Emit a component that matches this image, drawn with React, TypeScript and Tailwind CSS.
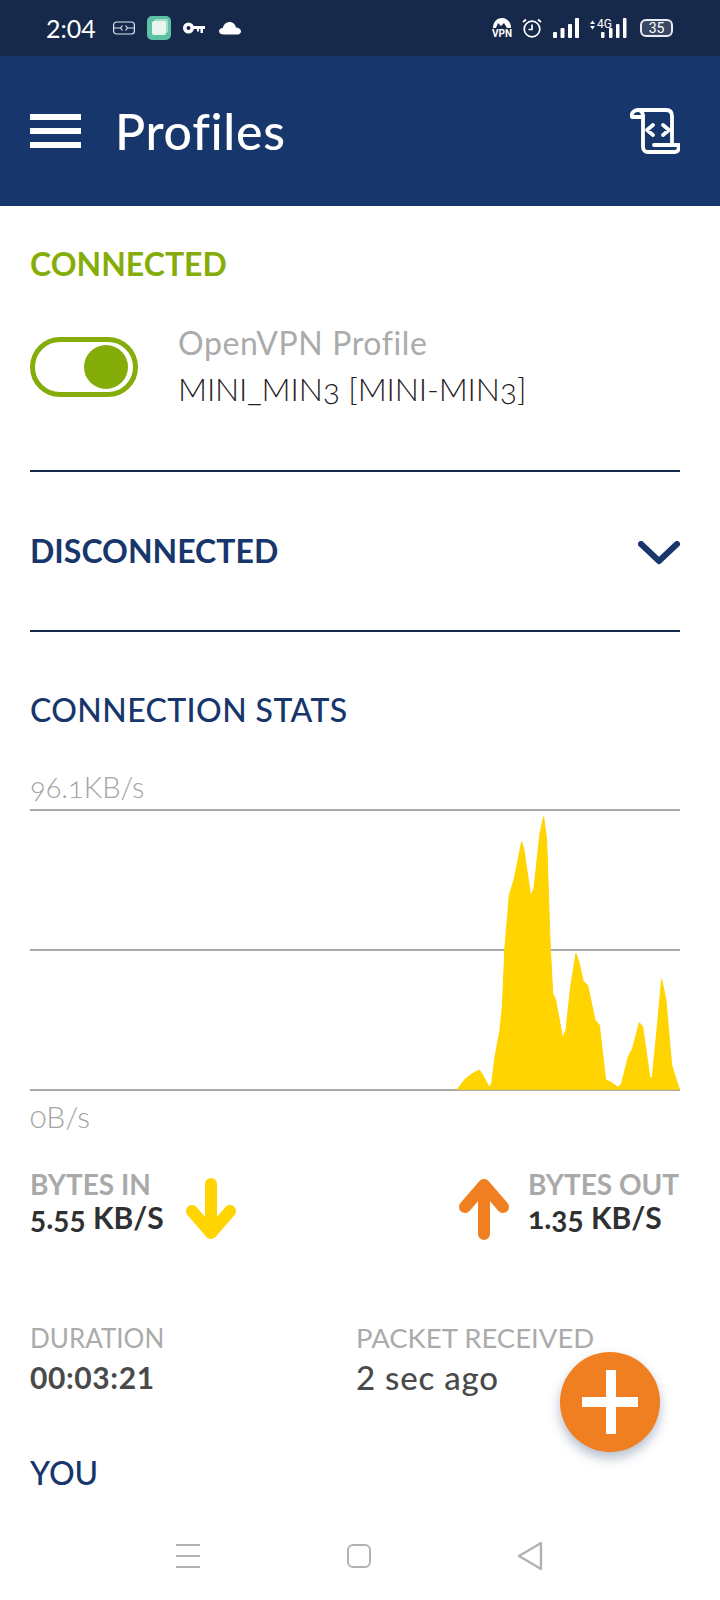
import React from "react";

const chartArea =
  "M52,868 L75,838 L95,822 L118,810 L128,825 L148,862 L155,850 L165,770 L180,690 L187,620 L195,440 L208,285 L222,240 L245,125 L252,150 L272,288 L282,265 L300,100 L311,50 L320,120 L330,420 L338,580 L347,600 L368,715 L378,690 L392,560 L408,460 L418,490 L430,545 L443,555 L465,660 L478,675 L497,840 L510,845 L535,862 L545,850 L565,770 L578,745 L598,668 L608,680 L630,835 L637,830 L650,700 L665,538 L678,600 L695,795 L718,868 Z";

function StatusBar() {
  return (
    <div className="h-14 shrink-0 bg-[#17294a] flex items-center text-white">
      <span className="ml-[46px] w-[50px] text-[25px] leading-none font-['Lato',sans-serif]">2:04</span>
      <svg className="ml-[17px]" width="22" height="14" viewBox="0 0 22 14" fill="none" stroke="#dfe6f2" strokeWidth="1.2">
        <rect x="0.6" y="1" width="20.8" height="12" rx="3" />
        <path d="M1 7H7M15 7H21M9.5 4.5L7.5 7L9.5 9.5M12.5 4.5L14.5 7L12.5 9.5" />
      </svg>
      <div className="ml-3 w-6 h-6 rounded-[5px] bg-[#5cc2a2] flex items-center justify-center">
        <div className="w-3.5 h-3.5 rounded-[2px] bg-[#e6f5ef] shadow-[2px_-2px_0_#a6dcc9]" />
      </div>
      <svg className="ml-3" width="22" height="12" viewBox="0 0 22 12" fill="white">
        <path d="M5.5 0.5a5.5 5.5 0 1 1-0.01 11a5.5 5.5 0 0 1 0.01-11zM5.5 4a2 2 0 1 0 0.01 4a2 2 0 0 0-0.01-4z" fillRule="evenodd" />
        <path d="M10 4H22V7H20V11H17.5V7H16V9.5H14V7H10z" />
      </svg>
      <svg className="ml-3.5" width="22" height="14" viewBox="0 0 22 14" fill="white">
        <path d="M5 13.5C2 13.5 0 12.2 0 10.2C0 8.3 1.6 7 3.8 7C4.6 3.2 7.5 1 10.6 1C14 1 16.4 3.3 17 6.6C19.8 6.8 22 8.2 22 10.4C22 12.3 20.2 13.5 17.5 13.5z" />
      </svg>

      <div className="ml-auto flex items-center">
        <div className="w-5 h-[22px] flex flex-col items-center">
          <svg width="20" height="11" viewBox="0 0 20 11" fill="white">
            <path d="M1 11C1 5 5 1 10 1C15 1 19 5 19 11H15L12 6L9 9L6 6L4 11z" />
          </svg>
          <span className="text-[10px] leading-[11px] font-bold font-['Roboto',sans-serif]">VPN</span>
        </div>
        <svg className="ml-2.5" width="20" height="20" viewBox="0 0 20 20" fill="none" stroke="white" strokeWidth="1.7">
          <circle cx="10" cy="11" r="7.8" />
          <path d="M10 6.5V11.5H6.5M1 4L4 1.5M19 4L16 1.5" />
        </svg>
        <svg className="ml-[11px]" width="26" height="20" viewBox="0 0 26 20" fill="white">
          <rect x="0" y="14" width="4" height="6" rx="1" />
          <rect x="7.5" y="10" width="4" height="10" rx="1" />
          <rect x="15" y="6" width="4" height="14" rx="1" />
          <rect x="22" y="0" width="4" height="20" rx="1" />
        </svg>
        <div className="ml-2.5 relative w-[38px] h-5">
          <svg width="38" height="20" viewBox="0 0 38 20" fill="white">
            <path d="M1 6L3.5 2.5L6 6zM1 8L3.5 11.5L6 8z" />
            <rect x="12" y="14" width="3.5" height="6" rx="1" />
            <rect x="20" y="10" width="3.5" height="10" rx="1" />
            <rect x="27" y="6" width="3.5" height="14" rx="1" />
            <rect x="34" y="0" width="3.5" height="20" rx="1" />
          </svg>
          <span className="absolute left-2 -top-[1px] text-[12px] leading-[14px] font-['Roboto',sans-serif]">4G</span>
        </div>
        <div className="ml-[13px] mr-[47px] w-[33px] h-[18px] rounded-[6px] border-2 border-[#e8edf5] bg-[#3a4763] flex items-center justify-center text-[14px] leading-none font-['Roboto',sans-serif]">
          35
        </div>
      </div>
    </div>
  );
}

function AppBar() {
  return (
    <div className="h-[150px] shrink-0 bg-[#17366b] flex items-center pl-[30px] pr-[40px] text-white">
      <div className="w-[51px] h-[34px] flex flex-col justify-between">
        <div className="h-1.5 bg-white" />
        <div className="h-1.5 bg-white" />
        <div className="h-1.5 bg-white" />
      </div>
      <h1 className="ml-[34px] text-[50px] leading-none font-medium tracking-[0.7px] font-['Lato',sans-serif]">Profiles</h1>
      <svg className="ml-auto" width="50" height="46" viewBox="0 0 50 46" fill="none" stroke="white" strokeWidth="3.8" strokeLinejoin="round" strokeLinecap="round">
        <path d="M8 2H36C40 2 42 4 42 8V36" />
        <path d="M13 8V39C13 42 15 44 18 44H45C48 44 49 41 49 37H24" />
        <path d="M2 9C1 5 4 2 8 2C11 2 13 4 13 9z" />
        <path d="M23 17L17 22L23 27M33 17L39 22L33 27" />
      </svg>
    </div>
  );
}

function StatBlock({ label, value, right }: { label: string; value: string; right?: boolean }) {
  return (
    <div className={right ? "w-[152px]" : "w-[136px]"}>
      <div className="h-[32px] flex items-center text-[28px] leading-none font-bold text-[#a9a9a9] whitespace-nowrap">{label}</div>
      <div className="h-[34px] flex items-center text-[30px] leading-none font-bold text-[#2f3032] whitespace-nowrap oldstyle-nums">{value}</div>
    </div>
  );
}

function Arrow({ up, color }: { up?: boolean; color: string }) {
  return (
    <svg width="50" height="62" viewBox="0 0 50 62" fill="none" stroke={color} strokeWidth="12" strokeLinecap="round" strokeLinejoin="round">
      {up ? <path d="M25 56V8M6 29L25 7L44 29" /> : <path d="M25 6V54M6 33L25 55L44 33" />}
    </svg>
  );
}

export default function App() {
  return (
    <div className="relative w-[720px] h-[1600px] overflow-hidden bg-white flex flex-col font-['Lato',sans-serif]">
      <StatusBar />
      <AppBar />

      <main className="flex-1 pl-[30px] pr-[40px]">
        <h2 className="mt-[38px] h-10 flex items-center text-[32px] leading-none font-bold text-[#85ad0a]">CONNECTED</h2>

        <div className="mt-[35px] h-24 flex items-center">
          <div className="w-[108px] h-[60px] rounded-full border-[5px] border-[#85ad0a] flex items-center justify-end pr-[5px]">
            <div className="w-11 h-11 rounded-full bg-[#85ad0a]" />
          </div>
          <div className="ml-10">
            <div className="h-11 flex items-center text-[32px] leading-none tracking-[0.6px] text-[#ababab]">OpenVPN Profile</div>
            <div className="h-12 flex items-center text-[32px] leading-none font-light tracking-[-0.15px] text-[#1f2024] oldstyle-nums">MINI_MIN3 [MINI-MIN3]</div>
          </div>
        </div>

        <div className="mt-[55px] h-0.5 bg-[#17294a]" />

        <div className="mt-[59px] h-10 flex items-center justify-between">
          <h2 className="text-[32px] leading-none font-bold text-[#17366b]">DISCONNECTED</h2>
          <svg className="mt-1" width="42" height="24" viewBox="0 0 42 24" fill="none" stroke="#17366b" strokeWidth="6" strokeLinecap="round" strokeLinejoin="round">
            <path d="M3 3L21 20L39 3" />
          </svg>
        </div>

        <div className="mt-[59px] h-0.5 bg-[#17294a]" />

        <h2 className="mt-[58px] h-10 flex items-center text-[32px] leading-none font-medium tracking-[0.4px] text-[#17366b]">CONNECTION STATS</h2>

        <div className="mt-[38px] h-10 pb-1 flex items-center text-[29px] leading-none font-light text-[#a4a4a4] oldstyle-nums">96.1KB/s</div>

        <svg className="block" width="650" height="285" viewBox="0 0 650 285">
          <g stroke="#a9a9a9" strokeWidth="2">
            <path d="M0 2H650M0 142H650M0 282H650" />
          </g>
          <g transform="translate(410 -8) scale(0.3333)">
            <path d={chartArea} fill="#ffd400" stroke="#ffd400" strokeWidth="3" strokeLinejoin="round" />
          </g>
        </svg>

        <div className="mt-[5px] h-10 pb-1 flex items-center text-[30px] leading-none font-light text-[#a4a4a4] oldstyle-nums">0B/s</div>

        <div className="mt-[30px] flex justify-between items-start">
          <div className="flex items-start">
            <StatBlock label="BYTES IN" value="5.55 KB/S" />
            <div className="ml-[20px] mt-[10px]">
              <Arrow color="#ffd400" />
            </div>
          </div>
          <div className="flex items-start">
            <div className="mt-[10px]">
              <Arrow up color="#f07f22" />
            </div>
            <div className="ml-[19px]">
              <StatBlock right label="BYTES OUT" value="1.35 KB/S" />
            </div>
          </div>
        </div>

        <div className="mt-[78px] flex">
          <div className="w-[326px]">
            <div className="h-10 flex items-center text-[26px] leading-none text-[#ababab]">DURATION</div>
            <div className="h-[38px] flex items-center text-[30px] leading-none font-bold tracking-[0.6px] text-[#4a4a4a]">00:03:21</div>
          </div>
          <div>
            <div className="h-10 flex items-center text-[27.5px] leading-none text-[#ababab]">PACKET RECEIVED</div>
            <div className="h-[38px] flex items-center text-[33px] leading-none font-medium tracking-[0.8px] text-[#4a4a4a]">2 sec ago</div>
          </div>
        </div>

        <h2 className="mt-[57px] h-10 flex items-center text-[32px] leading-none font-medium text-[#17366b]">YOU</h2>
      </main>

      <div className="absolute left-[560px] top-[1352px] w-[100px] h-[100px] rounded-full bg-[#f07f22] shadow-[0_6px_12px_rgba(40,70,110,0.35)] flex items-center justify-center">
        <svg width="56" height="64" viewBox="0 0 56 64" fill="white">
          <path d="M24 0H34V27H56V37H34V64H24V37H0V27H24z" />
        </svg>
      </div>

      <nav className="h-[90px] shrink-0 flex items-center pt-0.5">
        <svg className="ml-[175px]" width="26" height="26" viewBox="0 0 26 26" fill="none" stroke="#b2b2b2" strokeWidth="2">
          <path d="M1 2H25M1 13H25M1 24H25" />
        </svg>
        <svg className="ml-[145px]" width="26" height="26" viewBox="0 0 26 26" fill="none" stroke="#b2b2b2" strokeWidth="2">
          <rect x="2" y="2" width="22" height="22" rx="5" />
        </svg>
        <svg className="ml-[145px]" width="26" height="30" viewBox="0 0 26 30" fill="none" stroke="#b2b2b2" strokeWidth="2.4" strokeLinejoin="round">
          <path d="M24 2V28L2 15z" />
        </svg>
      </nav>
    </div>
  );
}
